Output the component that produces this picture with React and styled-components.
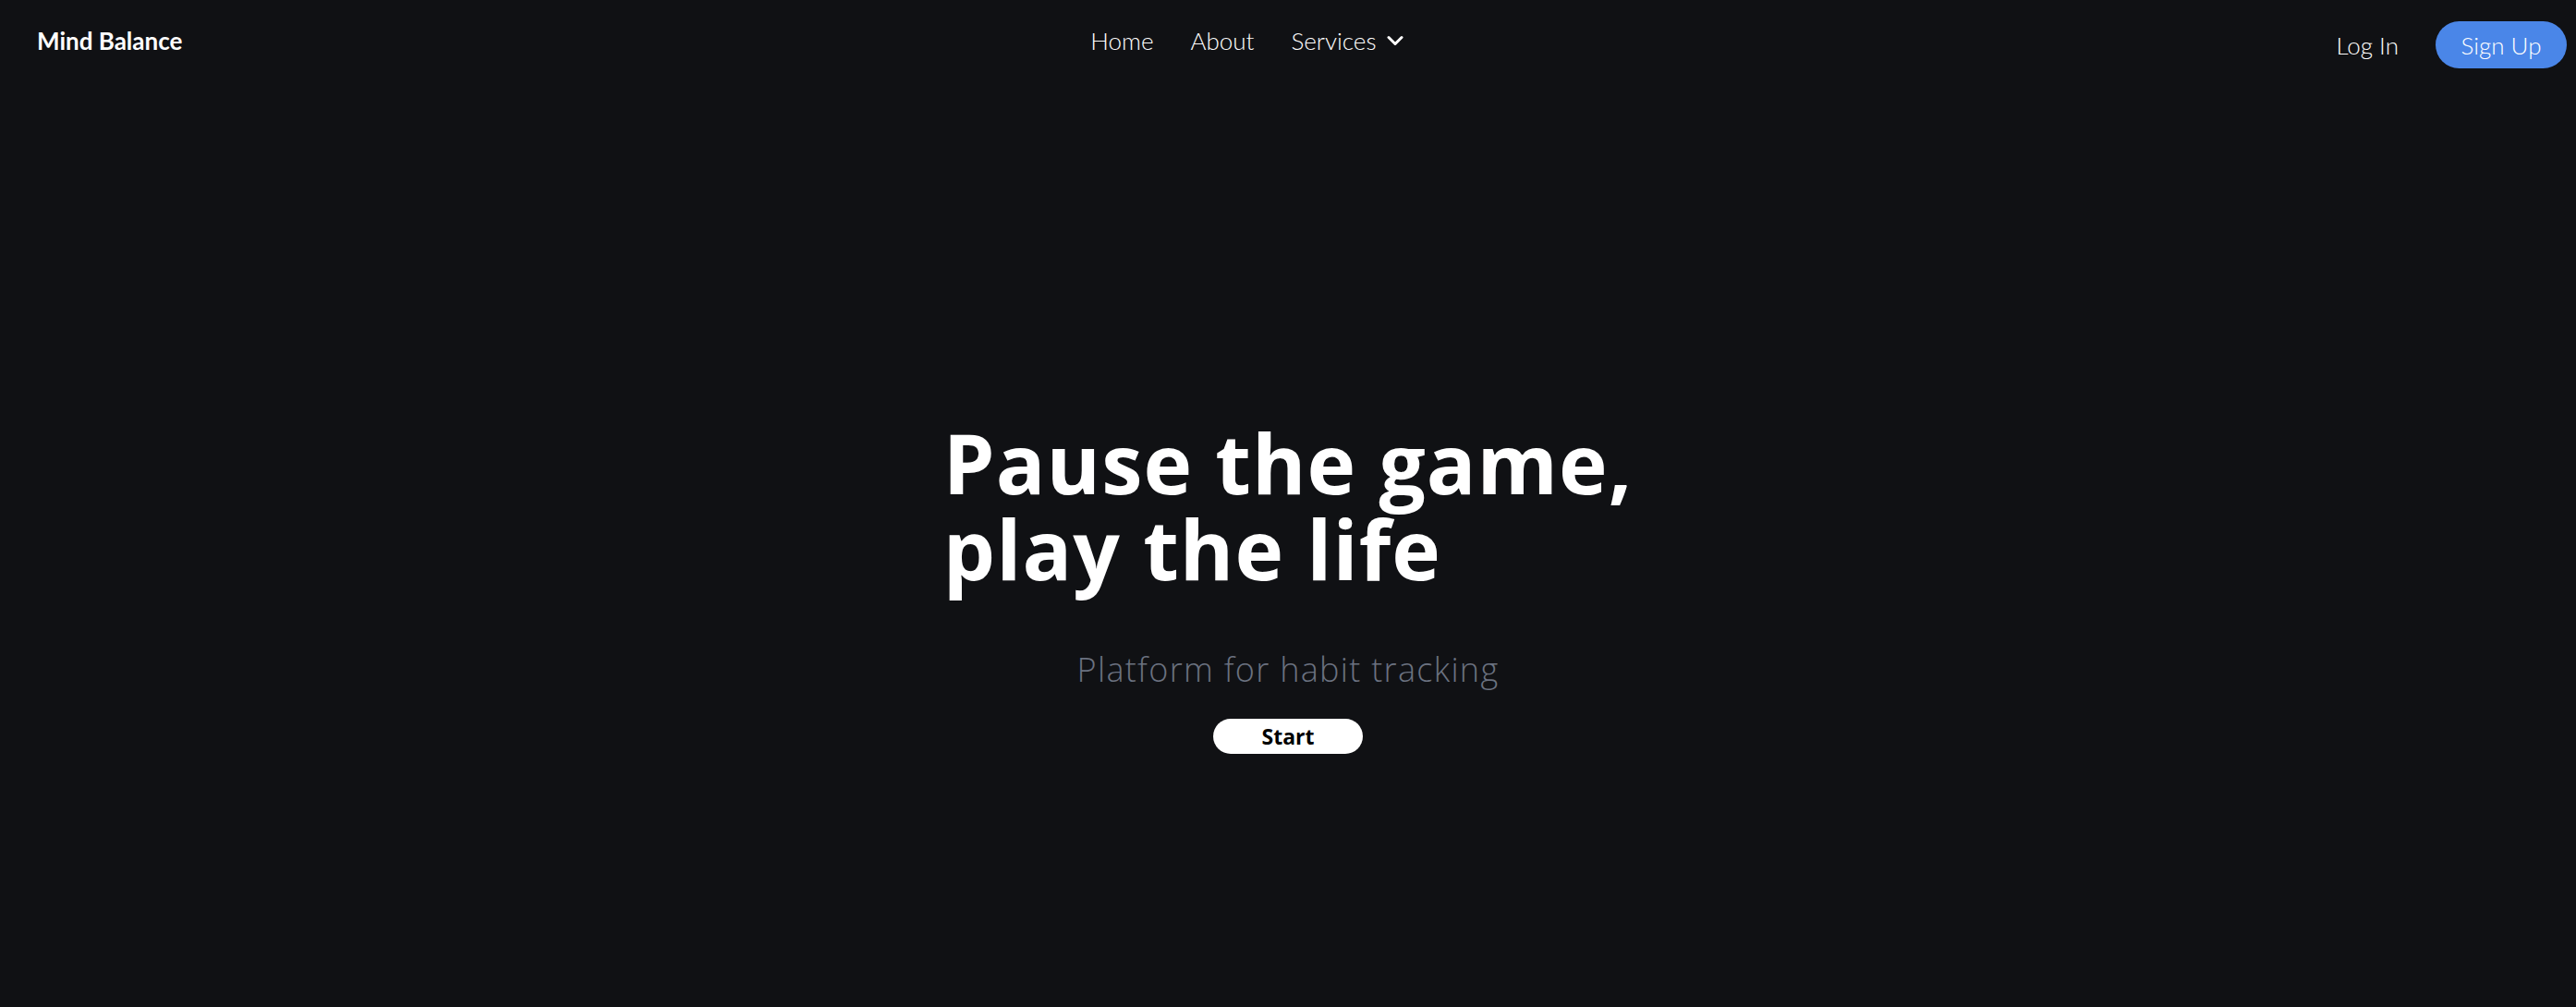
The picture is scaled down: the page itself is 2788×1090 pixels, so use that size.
import React from "react";
import styled, { createGlobalStyle } from "styled-components";

const GlobalStyle = createGlobalStyle`
  html, body {
    margin: 0;
    padding: 0;
    background: #101114;
  }
  body {
    font-family: Lato, "Open Sans", sans-serif;
    color: #ffffff;
    min-height: 1090px;
  }
  * { box-sizing: border-box; }
`;

const Page = styled.div`
  min-height: 1090px;
  display: flex;
  flex-direction: column;
  background: #101114;
`;

const Header = styled.header`
  display: flex;
  align-items: flex-start;
  justify-content: space-between;
  padding: 16px 10px 0 40px;
`;

const Logo = styled.div`
  font-family: Lato, sans-serif;
  font-weight: 700;
  font-size: 26px;
  line-height: 56px;
`;

const Nav = styled.nav`
  display: flex;
  align-items: center;
  gap: 40px;
  margin-right: 26px;
`;

const NavLink = styled.a`
  display: flex;
  align-items: center;
  gap: 12px;
  font-family: Lato, sans-serif;
  font-weight: 300;
  font-size: 26px;
  line-height: 56px;
  color: #ffffff;
  text-decoration: none;
`;

const Auth = styled.div`
  display: flex;
  align-items: center;
  gap: 40px;
  padding-top: 7px;
`;

const LoginLink = styled.a`
  font-family: Lato, sans-serif;
  font-weight: 300;
  font-size: 26px;
  color: #ffffff;
  text-decoration: none;
`;

const SignUp = styled.button`
  border: none;
  background: #4a86e8;
  color: #ffffff;
  font-family: Lato, sans-serif;
  font-weight: 300;
  font-size: 26px;
  height: 51px;
  width: 142px;
  border-radius: 26px;
  padding: 0;
`;

const Hero = styled.main`
  display: flex;
  flex-direction: column;
  align-items: center;
  padding-top: 380px;
`;

const Title = styled.h1`
  margin: 0;
  font-family: "Open Sans", sans-serif;
  font-weight: 700;
  font-size: 89px;
  line-height: 93px;
  letter-spacing: 0.012em;
  text-align: left;
  color: #ffffff;
`;

const Subtitle = styled.p`
  margin: 63px 0 0;
  font-family: "Open Sans", sans-serif;
  font-weight: 300;
  font-size: 36px;
  line-height: 1.2;
  letter-spacing: 1.3px;
  color: #6b7280;
`;

const StartButton = styled.button`
  margin-top: 32px;
  width: 162px;
  height: 38px;
  border: none;
  border-radius: 19px;
  background: #ffffff;
  color: #000000;
  font-family: "Open Sans", sans-serif;
  font-weight: 700;
  font-size: 23px;
  padding: 0;
`;

const Chevron = () => (
  <svg width="18" height="12" viewBox="0 0 18 12" fill="none">
    <path d="M2 2.5 L9 9.5 L16 2.5" stroke="#ffffff" strokeWidth="3" strokeLinecap="round" strokeLinejoin="round" />
  </svg>
);

export default function App() {
  return (
    <Page>
      <GlobalStyle />
      <Header>
        <Logo>Mind Balance</Logo>
        <Nav>
          <NavLink href="#">Home</NavLink>
          <NavLink href="#">About</NavLink>
          <NavLink href="#">
            Services
            <Chevron />
          </NavLink>
        </Nav>
        <Auth>
          <LoginLink href="#">Log In</LoginLink>
          <SignUp>Sign Up</SignUp>
        </Auth>
      </Header>
      <Hero>
        <Title>
          Pause the game,
          <br />
          play the life
        </Title>
        <Subtitle>Platform for habit tracking</Subtitle>
        <StartButton>Start</StartButton>
      </Hero>
    </Page>
  );
}
